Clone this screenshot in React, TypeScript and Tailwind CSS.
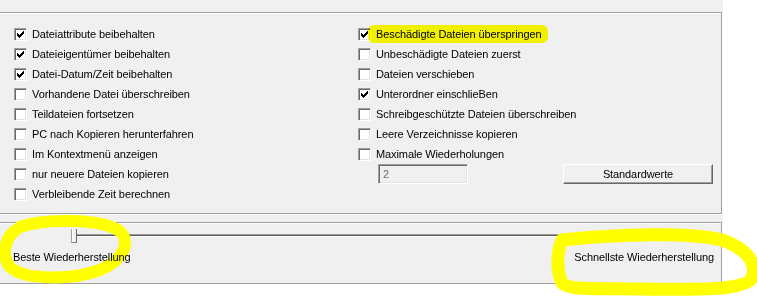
import React from "react";

const CHECK: [number, number][] = [
  [6, 0],
  [5, 1], [6, 1],
  [0, 2], [4, 2], [5, 2], [6, 2],
  [0, 3], [1, 3], [3, 3], [4, 3], [5, 3],
  [0, 4], [1, 4], [2, 4], [3, 4], [4, 4],
  [1, 5], [2, 5], [3, 5],
  [2, 6],
];

function Box({ checked }: { checked?: boolean }) {
  return (
    <span className="relative inline-block w-[13px] h-[13px] shrink-0 bg-white border border-t-[#a0a0a0] border-l-[#a0a0a0] border-b-white border-r-white shadow-[inset_1px_1px_0_#696969,inset_-1px_-1px_0_#e3e3e3]">
      {checked && (
        <svg className="absolute left-[2px] top-[2px]" width="7" height="7" viewBox="0 0 7 7" shapeRendering="crispEdges">
          {CHECK.map(([x, y], i) => (
            <rect key={i} x={x} y={y} width="1" height="1" fill="#000" />
          ))}
        </svg>
      )}
    </span>
  );
}

function Row({ label, checked, highlight }: { label: string; checked?: boolean; highlight?: boolean }) {
  return (
    <div className="relative flex h-[20px] items-center">
      <Box checked={checked} />
      <span className="ml-[5px] whitespace-nowrap">{label}</span>
      {highlight && (
        <span className="pointer-events-none absolute left-[10px] top-[1px] h-[18px] w-[180px] rounded-[6px] bg-[#ffff00] mix-blend-multiply" />
      )}
    </div>
  );
}

export default function App() {
  return (
    <div
      className="relative h-[299px] w-[757px] overflow-hidden bg-white text-[11px] tracking-[-0.1px] text-black"
      style={{ fontFamily: '"Liberation Sans", Arial, sans-serif' }}
    >
      <div className="h-[284px] w-[723px] bg-[#f0f0f0] pt-[12px]">
        {/* Options panel */}
        <div className="h-[202px] w-[722px] border border-l-0 border-[#a0a0a0] shadow-[inset_0_1px_0_#fff,1px_1px_0_#fff] pt-[11px]">
          <div className="flex">
            <div className="flex w-[344px] flex-col pl-[14px] box-content">
              <Row label="Dateiattribute beibehalten" checked />
              <Row label="Dateieigentümer beibehalten" checked />
              <Row label="Datei-Datum/Zeit beibehalten" checked />
              <Row label="Vorhandene Datei überschreiben" />
              <Row label="Teildateien fortsetzen" />
              <Row label="PC nach Kopieren herunterfahren" />
              <Row label="Im Kontextmenü anzeigen" />
              <Row label="nur neuere Dateien kopieren" />
              <Row label="Verbleibende Zeit berechnen" />
            </div>
            <div className="flex flex-col">
              <Row label="Beschädigte Dateien überspringen" checked highlight />
              <Row label="Unbeschädigte Dateien zuerst" />
              <Row label="Dateien verschieben" />
              <Row label="Unterordner einschlieBen" checked />
              <Row label="Schreibgeschützte Dateien überschreiben" />
              <Row label="Leere Verzeichnisse kopieren" />
              <Row label="Maximale Wiederholungen" />
              <div className="flex h-[20px] items-center">
                <div className="ml-[20px] flex h-[20px] w-[90px] items-center border border-t-[#a0a0a0] border-l-[#a0a0a0] border-b-white border-r-white bg-[#f0f0f0] pl-[4px] text-[#6d6d6d] shadow-[inset_1px_1px_0_#696969,inset_-1px_-1px_0_#e3e3e3]">
                  2
                </div>
                <div className="ml-[95px] flex h-[20px] w-[150px] items-center justify-center border border-t-white border-l-white border-b-[#696969] border-r-[#696969] bg-[#f0f0f0] shadow-[inset_-1px_-1px_0_#a0a0a0]">
                  Standardwerte
                </div>
              </div>
            </div>
          </div>
        </div>

        {/* Slider panel */}
        <div className="mt-[8px] h-[62px] w-[722px] border border-l-0 border-[#a0a0a0] shadow-[inset_0_1px_0_#fff,1px_1px_0_#fff]">
          <div className="h-[24px] pt-[11px]">
            <div className="relative ml-[75px] h-[2px] w-[570px] border-t border-t-[#a0a0a0] bg-[#5a5a5a] shadow-[0_1px_0_#fff]">
              <div className="absolute left-[-4px] top-[-6px] h-[14px] w-[6px] border-b border-l border-r border-b-[#8a8a8a] border-l-[#a0a0a0] border-r-[#696969] bg-[#f0f0f0] shadow-[inset_1px_0_0_#fff]" />
            </div>
          </div>
          <div className="flex h-[20px] items-center justify-between pl-[13px] pr-[7px]">
            <span className="relative z-10">Beste Wiederherstellung</span>
            <span className="relative z-10">Schnellste Wiederherstellung</span>
          </div>
        </div>
      </div>

      {/* Yellow annotation marks */}
      <svg className="pointer-events-none absolute left-0 top-0" width="757" height="299" viewBox="0 0 757 299">
        <path
          d="M 20 227 C 45 218, 100 219, 118 230 C 130 238, 128 258, 100 270 C 70 281, 22 280, 9 266 C 2 256, 4 238, 16 230"
          fill="none"
          stroke="#ffff00"
          strokeWidth="12"
          strokeLinecap="round"
        />
        <path
          d="M 562 240 C 620 234, 690 232, 722 240 C 745 248, 758 262, 752 278 C 745 290, 700 290, 640 289 C 600 288, 570 291, 562 283 C 556 270, 557 252, 562 240 Z"
          fill="none"
          stroke="#ffff00"
          strokeWidth="13"
          strokeLinejoin="round"
        />
      </svg>
    </div>
  );
}
